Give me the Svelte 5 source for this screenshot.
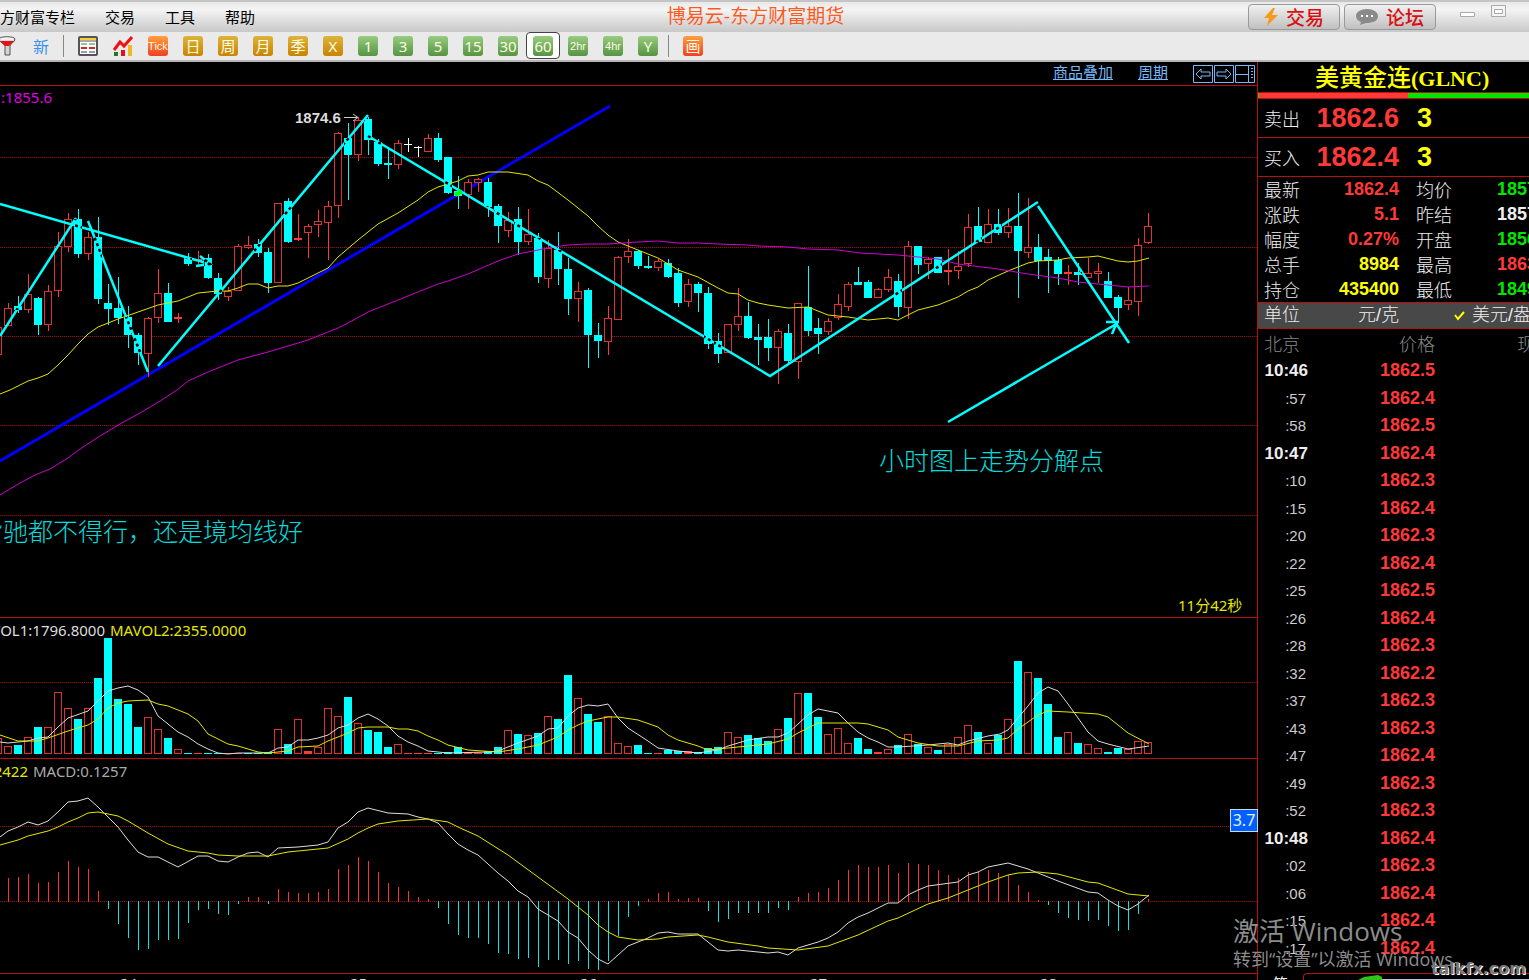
<script lang="ts">
    const menu = ['方财富专栏', '交易', '工具', '帮助'];

    const periods = [
        { text: 'Tick', kind: 'chip-hot' },
        { text: '日', kind: 'chip-gold' },
        { text: '周', kind: 'chip-gold' },
        { text: '月', kind: 'chip-gold' },
        { text: '季', kind: 'chip-gold' },
        { text: 'X', kind: 'chip-gold' },
        { text: '1', kind: 'chip-green' },
        { text: '3', kind: 'chip-green' },
        { text: '5', kind: 'chip-green' },
        { text: '15', kind: 'chip-green' },
        { text: '30', kind: 'chip-green' },
        { text: '60', kind: 'chip-green' },
        { text: '2hr', kind: 'chip-green' },
        { text: '4hr', kind: 'chip-green' },
        { text: 'Y', kind: 'chip-green' }
    ];
    let active = $state('60');
    let unit = $state('usd');

    // candle: kind (u up, d down, w flat), high, body top, body bottom, low
    const candles = `u 327 327 355 355,u 303 308 326 326,d 296 306 310 313,u 274 294 310 313,d 297 298 325 335,
u 285 291 325 331,u 232 246 291 297,u 213 219 247 252,d 209 219 254 258,u 232 237 254 260,d 217 237 299 304,
d 284 303 309 325,d 277 308 318 324,d 306 317 335 348,d 333 335 353 365,u 317 318 354 377,u 269 293 318 323,
d 283 293 322 322,u 313 317 319 323,d 253 258 264 266,u 251 259 261 266,d 254 258 278 279,d 273 278 294 300,
u 287 291 297 301,u 244 246 291 291,u 236 245 248 249,d 239 244 253 257,d 248 252 283 293,u 203 203 283 283,
d 198 201 242 243,u 214 238 240 241,u 224 226 233 258,u 210 221 225 237,u 201 206 223 260,u 132 133 206 218,
d 123 138 155 200,u 117 120 155 161,d 117 119 140 155,d 139 142 164 166,d 148 163 165 179,u 140 143 165 169,
w 138 144 145 152,w 146 147 148 157,u 134 138 152 152,d 133 138 160 162,d 157 157 193 194,d 176 191 196 209,
u 179 182 195 209,u 178 179 183 192,d 178 182 207 217,d 204 206 226 243,u 212 220 231 237,d 207 219 242 255,
u 209 234 242 245,d 233 238 277 283,u 240 248 279 288,d 232 250 269 285,d 258 269 299 315,u 282 291 299 322,
d 288 290 335 368,d 323 335 341 358,u 306 318 342 355,u 256 257 320 320,u 239 251 257 263,d 250 251 266 269,
d 256 266 268 269,u 259 261 268 271,d 259 263 277 278,d 268 273 303 307,u 279 284 302 307,d 282 284 293 312,
d 287 293 344 349,d 333 341 354 363,u 324 324 353 353,u 288 316 325 331,d 302 316 338 339,d 324 337 340 365,
d 319 337 348 361,u 329 331 348 384,d 324 333 361 365,u 303 303 362 379,d 266 307 331 336,d 318 328 334 354,
u 318 321 332 335,u 294 304 318 320,u 282 284 307 311,d 267 282 285 285,d 280 282 298 298,u 288 289 298 298,
u 269 277 290 292,d 274 281 307 317,u 241 246 308 319,d 246 246 265 274,u 257 259 264 279,d 257 257 273 273,
u 249 270 272 285,u 251 266 271 279,u 214 227 264 267,d 207 226 242 242,u 209 224 243 243,d 209 224 233 235,
u 208 226 233 238,d 193 226 251 298,u 198 247 253 258,d 234 247 261 279,d 249 257 261 293,d 257 260 274 285,
u 265 272 274 285,d 263 272 275 285,u 258 273 278 278,u 263 271 274 283,d 272 281 298 298,d 295 297 308 323,
u 287 300 305 310,u 238 245 302 316,u 213 226 243 244`
        .split(',')
        .map((row, i) => {
            const [kind, ...v] = row.trim().split(' ');
            const [high, top, bottom, low] = v.map(Number);
            return { x: i * 10 - 2, kind, high, top, bottom, low, h: Math.max(bottom - top, 1) };
        });

    const volumes = `u738 u746 d745 u737 d727 u727 u692 u708 d719 u708 d678 d638 d699 d704 d727 u717 u729 d738 u749 d753
u753 d753 d753 u753 u753 d753 d753 d752 u729 d744 u719 u751 u747 u708 u716 d697 u723 d730 d732 d747 u744 u753 u753 u753
d753 d752 d747 u753 u753 d751 d747 u730 d734 u735 d733 u716 d719 d675 u698 d714 d722 u716 u743 u746 d745 d753 u753 d750
d751 u751 d752 d748 d747 u732 u737 d735 d738 d741 u729 d718 u693 d693 d717 u734 u728 u743 d738 d749 u752 u749 d745 u734
d744 u747 d750 u744 u737 u725 d732 u743 d735 u719 d661 u672 d678 d704 d737 u732 d743 u744 u748 d752 d748 u749 u741 u742`
        .split(/\s+/)
        .map((v, i) => ({ x: i * 10 - 2, kind: v[0], top: Number(v.slice(1)) }));

    const macd = `878 877 874 883 882 872 861 867 869 891 908 923 937 949 948 939 939 938 922 909 908 913 914 903 897 897
903 889 892 893 893 892 889 869 865 857 861 872 883 887 891 897 899 907 923 934 937 937 943 952 953 958 957 966 959 959
963 960 968 969 960 935 916 905 899 893 892 899 898 898 910 921 918 912 912 912 912 907 909 897 893 892 888 880 870 865
867 867 865 873 863 864 865 870 875 878 872 872 870 873 875 885 892 900 904 912 917 919 920 919 925 930 929 913 899`
        .split(/\s+/)
        .map((v, i) => ({ x: i * 10 + 8, y: Number(v) }));

    const ma20 = '0,394 10,390 28,381 38,378 48,374 58,365 68,355 78,344 88,334 98,327 118,319 138,312 158,305 178,301 198,293 218,291 228,291 238,288 248,284 258,284 268,288 278,286 288,286 298,283 308,278 328,268 338,257 358,240 378,224 398,213 418,200 428,192 438,187 458,181 468,176 478,175 488,172 508,172 528,175 538,181 548,185 568,200 588,216 598,226 608,235 618,242 638,250 658,258 678,270 698,277 718,288 728,293 738,294 748,300 758,303 768,305 788,308 808,307 828,315 848,317 868,320 888,318 898,320 918,310 938,305 958,297 968,291 978,287 988,280 1008,271 1028,263 1038,261 1058,260 1068,258 1088,257 1098,256 1118,261 1128,262 1138,261 1149,258';
    const ma60 = '0,495 20,483 35,475 50,469 68,458 80,449 100,436 120,424 140,413 160,401 177,390 188,381 208,372 238,360 268,352 298,343 308,340 338,328 348,323 368,312 398,300 418,292 438,284 448,281 468,274 498,261 518,254 548,248 568,245 588,244 608,244 638,242 658,241 678,243 698,243 718,244 748,245 758,246 788,247 808,249 838,250 860,253 898,255 938,259 958,264 998,269 1028,274 1058,278 1078,282 1098,284 1128,287 1149,286';
    const vol5 = '0,742 8,743 28,741 38,738 48,737 58,727 68,718 88,711 98,701 108,691 118,688 128,686 138,690 148,697 158,716 178,732 188,737 198,744 208,749 218,753 228,754 238,753 268,753 278,748 288,747 298,740 308,740 318,738 328,735 338,728 348,725 358,718 368,714 378,719 388,726 398,736 408,742 418,746 428,751 448,753 488,752 498,751 508,747 518,743 538,736 548,729 558,728 568,716 578,708 588,705 598,706 608,704 618,718 628,728 648,741 658,748 678,751 698,753 718,750 728,746 748,740 768,737 778,737 788,733 798,724 808,715 818,709 838,713 848,723 858,732 868,738 878,742 888,747 898,747 928,745 948,743 958,745 968,741 988,736 1000,734 1008,730 1018,718 1028,706 1038,693 1048,687 1058,691 1068,704 1078,718 1088,732 1098,741 1108,744 1128,749 1149,746';
    const vol10 = '0,735 18,741 38,741 48,738 68,731 78,728 88,725 98,719 108,708 118,703 128,701 148,700 158,704 168,706 188,714 198,721 208,734 228,744 238,746 258,752 268,753 288,751 298,747 318,746 328,741 348,733 358,728 368,727 388,727 398,729 408,729 418,731 428,736 438,740 448,745 468,750 498,752 518,749 538,745 558,737 568,730 578,725 588,721 608,717 618,717 638,720 658,727 668,735 678,740 698,746 708,750 728,748 768,744 788,739 798,733 808,728 818,723 858,723 868,724 888,730 898,737 918,743 938,746 958,746 978,741 998,740 1008,738 1018,729 1028,722 1038,715 1048,711 1068,712 1098,714 1108,717 1128,733 1149,744';
    const dif = '0,837 8,831 18,827 28,822 38,825 48,821 58,812 68,802 78,801 88,798 98,807 108,817 118,827 128,840 138,852 148,857 158,857 178,867 198,856 208,856 218,861 228,862 238,857 248,853 258,852 268,857 278,848 298,847 318,845 328,842 338,828 348,822 358,812 368,808 388,813 408,814 418,817 428,819 438,823 448,834 458,844 468,850 478,855 498,873 508,881 518,891 528,897 538,909 558,921 568,932 578,938 588,950 598,959 608,964 618,955 628,946 648,938 658,933 668,932 678,934 698,934 718,950 728,951 738,950 768,953 778,952 788,955 798,948 818,942 828,938 838,932 848,923 858,917 868,913 888,903 898,903 908,895 918,890 928,886 958,882 968,875 978,872 988,867 998,865 1008,863 1028,869 1038,873 1058,881 1088,892 1098,893 1108,900 1118,906 1128,910 1138,904 1149,895';
    const dea = '0,845 18,840 28,836 48,831 58,827 68,822 78,818 88,813 98,812 108,814 118,816 128,821 148,833 168,844 188,851 208,853 218,855 238,856 268,856 288,852 328,848 348,839 358,833 368,828 378,824 398,821 428,819 448,822 458,827 478,836 508,855 538,877 568,899 588,915 598,925 608,932 618,937 638,940 658,939 668,937 698,935 708,937 728,942 758,946 768,948 798,950 828,946 858,935 888,921 898,918 928,904 948,898 968,890 988,882 1008,875 1018,873 1038,872 1058,874 1088,882 1098,883 1128,894 1149,896';

    // hand drawn trend lines
    const strokes = 'M0 204L210 264M196 266L210 264L200 256M0 336L76 218M88 221L148 372M158 366L368 115M368 136L770 376L1038 202M1038 206L1129 343M948 422L1118 323M1106 322H1117L1112 334';

    const days = [['24', 120], ['25', 350], ['26', 580], ['27', 810], ['28', 1040]];

    const quotes = [
        ['最新', '1862.4', 'red', '均价', '1857', 'green'],
        ['涨跌', '5.1', 'red', '昨结', '1857', 'white'],
        ['幅度', '0.27%', 'red', '开盘', '1856', 'green'],
        ['总手', '8984', 'yellow', '最高', '1863', 'red'],
        ['持仓', '435400', 'yellow', '最低', '1849', 'green']
    ];

    const ticks = [
        ['10:46', '1862.5'], [':57', '1862.4'], [':58', '1862.5'],
        ['10:47', '1862.4'], [':10', '1862.3'], [':15', '1862.4'], [':20', '1862.3'],
        [':22', '1862.4'], [':25', '1862.5'], [':26', '1862.4'], [':28', '1862.3'],
        [':32', '1862.2'], [':37', '1862.3'], [':43', '1862.3'], [':47', '1862.4'],
        [':49', '1862.3'], [':52', '1862.3'], ['10:48', '1862.4'], [':02', '1862.3'],
        [':06', '1862.4'], [':15', '1862.4'], [':17', '1862.4']
    ];
</script>

<div class="app">
    <header class="titlebar">
        <nav class="menu">
            {#each menu as item}
                <button>{item}</button>
            {/each}
        </nav>
        <h1>博易云-东方财富期货</h1>
        <div class="right">
            <button class="pill">
                <svg width="14" height="18" viewBox="0 0 14 18"><path d="M9 0L0 10h5L3 18L14 7H8L11 0z" fill="#f59a1b" /></svg>
                交易
            </button>
            <button class="pill">
                <svg width="22" height="18" viewBox="0 0 22 18">
                    <path d="M11 1C5 1 0 4 0 8c0 3 2 5 5 6l-1 3 6-2c7 0 12-2 12-7 0-4-5-7-11-7z" fill="#8a8a8a" />
                    <path d="M5 7h2v2H5zM10 7h2v2h-2zM15 7h2v2h-2z" fill="#fff" />
                </svg>
                论坛
            </button>
            <div class="wins">
                <button aria-label="最小化">
                    <svg width="16" height="16"><path d="M.5 8.500h14v4H.5z" fill="#fff" stroke="#aaa" /></svg>
                </button>
                <button aria-label="最大化">
                    <svg width="16" height="16"><path d="M.5 1.500h14v11H.5z" fill="#f4f4f4" stroke="#aaa" /><path d="M3.500 5.500h8v4h-8z" fill="#fff" stroke="#aaa" /></svg>
                </button>
            </div>
        </div>
    </header>

    <div class="toolbar">
        <button class="tool" aria-label="筛选">
            <svg width="20" height="20" viewBox="0 0 20 20">
                <path d="M1 3c0-3 16-3 16 0 0 3-5 5-5 7v9H7v-9C7 8 1 6 1 3z" fill="#d4d4d4" stroke="#555" />
                <path d="M2 5h14l-5 5H7z" fill="#e81010" />
                <ellipse cx="9" cy="3" rx="7" ry="1.500" fill="#f4f4f4" />
            </svg>
        </button>
        <button class="tool new">新</button>
        <span class="sep"></span>
        <button class="tool" aria-label="报价表">
            <svg width="20" height="20" viewBox="0 0 20 20">
                <rect x="1" y="1" width="18" height="18" rx="1" fill="#fff" stroke="#555" stroke-width="2" />
                <path d="M2 3h16" stroke="#fc3" stroke-width="2" /><path d="M2 5h16" stroke="#555" />
                <path d="M3 8h6M11 8h6" stroke="#2a8a2a" />
                <path d="M3 12h6M11 12h6" stroke="#d22" stroke-width="2" />
                <path d="M3 16h6M11 16h6" stroke="#246" />
            </svg>
        </button>
        <button class="tool" aria-label="走势图">
            <svg width="20" height="20" viewBox="0 0 20 20">
                <path d="M1 16h4v4H1z" fill="#1a7a30" /><path d="M8 14h4v6H8z" fill="#e01020" /><path d="M15 9h4v11h-4z" fill="#f0b820" />
                <path d="M1 14L7 6l4 4 8-9" fill="none" stroke="#f01010" stroke-width="3" />
            </svg>
        </button>
        {#each periods as p}
            <button class="tool" class:active={active === p.text} onclick={() => (active = p.text)}>
                <span class="chip {p.kind}" class:small={p.text.length > 2}>{p.text}</span>
            </button>
        {/each}
        <span class="sep"></span>
        <button class="tool"><span class="chip chip-hot">画</span></button>
    </div>

    <main>
        <section class="charts">
            <div class="links">
                <a href="#overlay">商品叠加</a>
                <a href="#period">周期</a>
                <span class="pager">
                    <button aria-label="向左"><svg width="21" height="18"><path d="M.5.5h19v17H.5zM3 9l5-5v3h9v4H8v3z" /></svg></button>
                    <button aria-label="向右"><svg width="21" height="18"><path d="M.5.5h19v17H.5zM17 9l-5-5v3H3v4h9v3z" /></svg></button>
                    <button aria-label="布局"><svg width="21" height="18"><path d="M.5.5h19v17H.5zM13.500 0v18M0 9.500h13M16 3.500h2M16 6.500h2M16 9.500h2M16 12.500h2" /></svg></button>
                </span>
            </div>

            <svg class="pane" width="100%" height="531">
                <defs>
                    <clipPath id="down">
                        {#each candles.filter(c => c.kind === 'd') as c}
                            <rect x={c.x - 4} y={c.top} width="8" height={c.h} />
                        {/each}
                    </clipPath>
                </defs>
                <g transform="translate(0 -86)">
                    {#each [157, 247, 336, 425, 515] as y}
                        <line class="grid" x1="0" x2="100%" y1={y + 0.5} y2={y + 0.5} />
                    {/each}
                    <path class="support" d="M0 461L610 106" />
                    {#each candles as c}
                        <g class={c.kind}>
                            <rect class="fill" x={c.x} y={c.high} width="1" height={Math.max(c.top - c.high, 0)} />
                            <rect class="fill" x={c.x} y={c.bottom} width="1" height={Math.max(c.low - c.bottom, 0)} />
                            {#if c.kind === 'u' && c.h > 2}
                                <rect class="hollow" x={c.x - 3.5} y={c.top + 0.5} width="7" height={c.h - 1} />
                            {:else}
                                <rect class="fill" x={c.x - 4} y={c.top} width="8" height={c.h} />
                            {/if}
                        </g>
                    {/each}
                    <polyline class="yellow-line" points={ma20} />
                    <polyline class="purple-line" points={ma60} />
                    <path class="trend" d={strokes} />
                    <path class="trend-cut" d={strokes} clip-path="url(#down)" />
                    <path d="M455 195l7-4" stroke="#0f0" stroke-width="4" />
                    <text class="ma" x="52" y="103" text-anchor="end">:1855.6</text>
                    <text class="peak" x="295" y="123">1874.6</text>
                    <path d="M344 117.500h13M353 114l5 3.500l-5 3.500" fill="none" stroke="#ccc" />
                    <text class="note" x="879" y="470">小时图上走势分解点</text>
                    <text class="note" x="-22" y="541">背驰都不得行，还是境均线好</text>
                    <text class="left-time" x="1178" y="611">11分42秒</text>
                </g>
            </svg>

            <svg class="pane" width="100%" height="140">
                <g transform="translate(0 -618)">
                    <line class="grid" x1="0" x2="100%" y1="682.500" y2="682.500" />
                    {#each volumes as v}
                        <g class={v.kind}>
                            {#if v.kind === 'u' && v.top < 751}
                                <rect class="hollow" x={v.x - 3.5} y={v.top + 0.5} width="7" height={753 - v.top} />
                            {:else}
                                <rect class="fill" x={v.x - 4} y={v.top} width="8" height={754 - v.top} />
                            {/if}
                        </g>
                    {/each}
                    <polyline class="white-line" points={vol5} />
                    <polyline class="yellow-line" points={vol10} />
                    <text class="white-text" x="105" y="636" text-anchor="end">MAVOL1:1796.8000</text>
                    <text class="yellow-text" x="110" y="636">MAVOL2:2355.0000</text>
                </g>
            </svg>

            <div class="macd">
                <svg class="pane" width="100%" height="214">
                    <g transform="translate(0 -759)">
                        <line class="grid" x1="0" x2="100%" y1="826.500" y2="826.500" />
                        <line class="grid" x1="0" x2="100%" y1="901.500" y2="901.500" />
                        {#each macd as m}
                            <rect class={m.y < 901 ? 'bar-up' : 'bar-down'} x={m.x} y={Math.min(m.y, 901)} width="1" height={Math.abs(m.y - 901) + 1} />
                        {/each}
                        <polyline class="white-line" points={dif} />
                        <polyline class="yellow-line" points={dea} />
                        <text class="yellow-text" x="28" y="777" text-anchor="end">2422</text>
                        <text class="grey-text" x="33" y="777">MACD:0.1257</text>
                    </g>
                </svg>
                <span class="badge">3.7</span>
            </div>

            <svg class="axis" width="100%" height="24">
                {#each days as [d, x]}
                    <text x={x} y="15">{d}</text>
                {/each}
            </svg>
        </section>

        <aside>
            <h2>美黄金连<span>(GLNC)</span></h2>
            <div class="ratio"><i></i></div>
            <div class="quote"><span>卖出</span><b>1862.6</b><em>3</em></div>
            <div class="quote"><span>买入</span><b>1862.4</b><em>3</em></div>
            <table class="stats">
                <colgroup><col class="c1" /><col class="c2" /><col class="c3" /><col /></colgroup>
                <tbody>
                    {#each quotes as q}
                        <tr>
                            <th>{q[0]}</th>
                            <td class={q[2]}>{q[1]}</td>
                            <th class="second">{q[3]}</th>
                            <td class="cut {q[5]}">{q[4]}</td>
                        </tr>
                    {/each}
                </tbody>
            </table>
            <div class="units">
                <span>单位</span>
                <button class="cny" onclick={() => (unit = 'cny')}>元/克</button>
                <svg width="12" height="10" viewBox="0 0 12 10"><path d="M1 4l3 4 6-7" fill="none" stroke="#ff0" stroke-width="2" /></svg>
                <button onclick={() => (unit = 'usd')}>美元/盎</button>
            </div>
            <div class="ticks">
                <table>
                    <thead>
                        <tr><th class="time">北京</th><th class="price">价格</th><th class="now">现</th></tr>
                    </thead>
                    <tbody>
                        {#each ticks as [time, price]}
                            <tr>
                                <td class="time" class:minute={time.length > 3}>{time}</td>
                                <td class="price">{price}</td>
                                <td></td>
                            </tr>
                        {/each}
                    </tbody>
                </table>
            </div>
            <div class="tabs">
                <span>笔</span>
                <div class="tab">
                    <svg width="226" height="8"><path d="M54 6l6-3 14-2 4 2v5H54z" fill="#2fc41c" /><path d="M78 5h148v3H78z" fill="#b4c4dc" /></svg>
                </div>
            </div>
        </aside>
    </main>

    <div class="activate">
        <p class="big">激活 Windows</p>
        <p>转到“设置”以激活 Windows。</p>
    </div>
    <span class="site">talkfx.com</span>
</div>

<style>
    :global(body) {
        margin: 0;
        background: #000;
    }

    .app {
        position: relative;
        height: 100vh;
        overflow: hidden;
        background: #000;
        font-family: 'Noto Sans', 'Noto Sans CJK SC', sans-serif;
        color: #eee;
    }

    button {
        margin: 0;
        padding: 0;
        border: 0;
        background: none;
        font: inherit;
        color: inherit;
        white-space: nowrap;
    }

    svg {
        display: block;
        flex: none;
    }

    h1,
    h2,
    p {
        margin: 0;
        font-weight: 400;
    }

    /* title bar */
    .titlebar {
        display: flex;
        align-items: center;
        box-sizing: border-box;
        height: 32px;
        border-top: 2px solid #c4c4c4;
        background: linear-gradient(#e8e8e8, #f4f4f4 25%, #c8c8c8);
    }

    .menu {
        display: flex;
        gap: 30px;
        font: 15px/28px 'Noto Sans CJK SC', sans-serif;
        color: #000;
    }

    h1 {
        flex: 1;
        padding-left: 8px;
        text-align: center;
        font: 19px/28px 'Liberation Sans', 'Noto Sans CJK SC', sans-serif;
        color: #ff5a1e;
    }

    .right {
        display: flex;
        align-items: center;
    }

    .pill {
        display: flex;
        align-items: center;
        justify-content: center;
        gap: 8px;
        box-sizing: border-box;
        width: 92px;
        height: 26px;
        margin-right: 4px;
        border: 1px solid #999;
        border-radius: 4px;
        background: linear-gradient(#f0f0f0, #c0c0c0);
        font: 500 19px/22px 'Noto Sans CJK SC', sans-serif;
        color: #d81010;
    }

    .wins {
        display: flex;
        align-self: flex-start;
        gap: 15px;
        padding: 0 22px 0 20px;
    }

    /* toolbar */
    .toolbar {
        display: flex;
        align-items: center;
        box-sizing: border-box;
        height: 30px;
        padding-bottom: 1px;
        border-bottom: 2px solid #b8b4b4;
        background: #eaeaea;
        margin-left: -10px;
    }

    .tool {
        display: flex;
        align-items: center;
        flex: none;
        box-sizing: border-box;
        width: 34px;
        height: 27px;
        margin-left: 1px;
        padding-left: 6px;
        border: 1px solid transparent;
        border-radius: 4px;
    }

    .tool.active {
        border-color: #444;
        background: #fff;
    }

    .new {
        font: 16px/24px 'Noto Sans CJK SC', sans-serif;
        color: #3a92f0;
    }

    .sep {
        flex: none;
        box-sizing: border-box;
        width: 7px;
        height: 22px;
        margin-left: 3px;
        border-left: 1px solid #888;
    }

    .chip {
        width: 20px;
        height: 20px;
        border-radius: 3px;
        text-align: center;
        font: 15px/20px 'Noto Sans', 'Noto Sans CJK SC', sans-serif;
        color: #fffbe0;
        overflow: hidden;
    }

    .chip.small {
        font: 11px/20px 'Liberation Sans', sans-serif;
    }

    .chip-hot {
        background: linear-gradient(#ffa040, #f04020);
    }

    .chip-gold {
        background: linear-gradient(#dcb43c, #c88400);
    }

    .chip-green {
        background: linear-gradient(#98cc80, #559442);
    }

    /* charts */
    main {
        display: flex;
    }

    .charts {
        flex: 1;
        min-width: 0;
    }

    .links {
        display: flex;
        justify-content: flex-end;
        gap: 25px;
        box-sizing: border-box;
        height: 24px;
        padding-right: 1px;
        border-bottom: 1px solid #b81010;
        font: 15px/20px 'Noto Sans CJK SC', sans-serif;
    }

    .links a {
        color: #78b8f8;
    }

    .pager {
        display: flex;
        padding-top: 1px;
    }

    .pager svg {
        fill: none;
        stroke: #78b8f8;
    }

    .pane {
        border-bottom: 1px solid #b81010;
        font: 15px 'Noto Sans', 'Noto Sans CJK SC', sans-serif;
    }

    .grid {
        stroke: #b00000;
        stroke-dasharray: 1 1;
    }

    .fill {
        fill: #ff3838;
    }

    .d .fill {
        fill: #0ff;
    }

    .w .fill {
        fill: #fff;
    }

    .hollow {
        fill: #000;
        stroke: #e03030;
    }

    .support,
    .trend,
    .trend-cut {
        fill: none;
        stroke-width: 2.5;
    }

    .support {
        stroke: #00f;
        stroke-width: 3;
    }

    .trend {
        stroke: #0ff;
    }

    .trend-cut {
        stroke: #000;
        stroke-dasharray: 3 3;
    }

    polyline {
        fill: none;
    }

    .yellow-line {
        stroke: #e6e600;
    }

    .purple-line {
        stroke: #d000d0;
    }

    .white-line {
        stroke: #ddd;
    }

    .ma {
        fill: #e000e0;
    }

    .peak {
        font: bold 15px 'Liberation Sans', sans-serif;
        fill: #ddd;
    }

    .note {
        font: 25px 'Noto Sans CJK SC', sans-serif;
        font-weight: 300;
        fill: #00dcdc;
    }

    .left-time,
    .yellow-text {
        fill: #e6e600;
    }

    .white-text {
        fill: #ddd;
    }

    .grey-text {
        fill: #aaa;
    }

    .bar-up {
        fill: #ff3030;
    }

    .bar-down {
        fill: #00e8e8;
    }

    .macd {
        position: relative;
    }

    .badge {
        position: absolute;
        top: 50px;
        right: -1px;
        z-index: 1;
        box-sizing: border-box;
        width: 28px;
        height: 23px;
        border: 1px solid #c8d8f0;
        background: #0060ff;
        text-align: center;
        font-size: 16px;
        line-height: 21px;
        color: #e8f0ff;
    }

    .axis {
        font: 15px 'Noto Sans', sans-serif;
        fill: #ddd;
    }

    /* quote panel */
    aside {
        flex: none;
        box-sizing: border-box;
        width: 272px;
        border-left: 1px solid #b81010;
        overflow: hidden;
    }

    h2 {
        height: 30px;
        padding-left: 57px;
        white-space: nowrap;
        font: 500 24px/28px 'Noto Sans CJK SC', sans-serif;
        color: #ff0;
    }

    h2 span {
        font: bold 22px/28px 'Liberation Serif', serif;
    }

    .ratio {
        height: 5px;
        padding-left: 1px;
        border: solid #b81010;
        border-width: 1px 0;
        background: #00e600;
    }

    .ratio i {
        display: block;
        width: 55%;
        height: 5px;
        background: #ff3838;
    }

    .quote {
        display: grid;
        grid-template-columns: 36px 99px 1fr;
        align-items: center;
        height: 38px;
        padding-left: 6px;
        border-bottom: 1px solid #b81010;
        font: 18px/38px 'Noto Sans CJK SC', sans-serif;
        font-weight: 300;
    }

    .quote b,
    .quote em {
        font: bold 27px/38px 'Liberation Sans', sans-serif;
        text-align: right;
        color: #ff3838;
    }

    .quote em {
        padding-left: 18px;
        text-align: left;
        color: #ff0;
    }

    table {
        width: 100%;
        border-collapse: collapse;
        table-layout: fixed;
    }

    th,
    td {
        padding: 0;
        white-space: nowrap;
        font: 18px/25px 'Noto Sans CJK SC', sans-serif;
        font-weight: 300;
        text-align: left;
    }

    td {
        font: bold 18px/25px 'Liberation Sans', sans-serif;
        text-align: right;
    }

    .c1 {
        width: 42px;
    }

    .c2 {
        width: 99px;
    }

    .c3 {
        width: 98px;
    }

    .stats th {
        padding-left: 6px;
    }

    .stats th.second {
        padding-left: 17px;
    }

    .stats td.cut {
        text-align: left;
    }

    .red {
        color: #ff3838;
    }

    .green {
        color: #00e600;
    }

    .yellow {
        color: #ff0;
    }

    .white {
        color: #eee;
    }

    .units {
        display: flex;
        align-items: center;
        height: 25px;
        padding-left: 6px;
        border: solid #b81010;
        border-width: 1px 0;
        background: #484848;
        font: 18px/25px 'Liberation Sans', 'Noto Sans CJK SC', sans-serif;
        font-weight: 300;
        color: #eee;
    }

    .units span {
        flex: none;
    }

    .cny {
        flex: none;
        width: 99px;
        text-align: right;
    }

    .units svg {
        margin: 0 6px 0 55px;
    }

    .ticks {
        height: 644px;
    }

    .ticks table {
        height: 633px;
    }

    .ticks th {
        height: 28px;
        color: #888;
    }

    .ticks .time {
        width: 48px;
        padding-right: 2px;
    }

    .ticks th.time {
        width: 44px;
        padding: 0 0 0 6px;
    }

    .ticks td.time {
        font: 15px/25px 'Liberation Sans', sans-serif;
        color: #ccc;
    }

    .ticks td.minute {
        padding-right: 0;
        font: bold 17px/25px 'Liberation Sans', sans-serif;
        color: #eee;
    }

    .ticks .price {
        width: 127px;
        text-align: right;
    }

    .ticks td.price {
        color: #ff3838;
    }

    .ticks .now {
        padding-left: 82px;
    }

    .tabs {
        display: flex;
        gap: 15px;
        padding-left: 15px;
        font: 15px/20px 'Noto Sans CJK SC', sans-serif;
    }

    .tab {
        flex: 1;
        height: 20px;
        border: solid #b81010;
        border-width: 1px 0 0 1px;
        border-top-left-radius: 4px;
    }

    /* overlays */
    .activate {
        position: absolute;
        left: 1233px;
        bottom: 8px;
        font: 18px/26px 'Open Sans', 'Noto Sans CJK SC', sans-serif;
        font-weight: 300;
        white-space: nowrap;
        color: #8c8c8c;
        z-index: 2;
    }

    .big {
        font-size: 26px;
        line-height: 30px;
    }

    .site {
        position: absolute;
        right: 3px;
        bottom: 1px;
        z-index: 3;
        font: bold 16px/20px 'DejaVu Sans', sans-serif;
        color: #777;
        text-shadow: 1px 1px 0 #fff;
    }
</style>
